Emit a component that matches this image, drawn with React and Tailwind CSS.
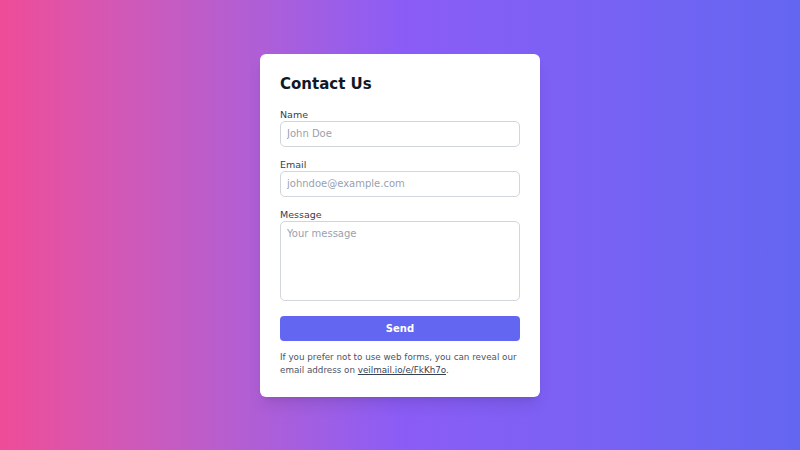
export default function App() {
  return (
    <main className="flex h-[450px] w-full items-center justify-center bg-linear-to-r from-[#ef4b98] via-[#8b5cf6] to-[#6366f1] font-['DejaVu_Sans',sans-serif]">
      {/* Card */}
      <div className="w-[280px] rounded-md bg-white p-5 shadow-lg">
        <h1 className="mb-[13px] text-[15px] leading-[21px] font-bold text-gray-900">Contact Us</h1>

        <form className="flex flex-col" onSubmit={(e) => e.preventDefault()}>
          <label className="text-[9.5px] leading-[13px] text-gray-700">Name</label>
          <input
            type="text"
            placeholder="John Doe"
            className="h-[26px] rounded-[5px] border border-gray-300 px-1.5 text-[10px] text-gray-800 placeholder:text-gray-400 outline-none"
          />

          <label className="mt-[11px] text-[9.5px] leading-[13px] text-gray-700">Email</label>
          <input
            type="email"
            placeholder="johndoe@example.com"
            className="h-[26px] rounded-[5px] border border-gray-300 px-1.5 text-[10px] text-gray-800 placeholder:text-gray-400 outline-none"
          />

          <label className="mt-[11px] text-[9.5px] leading-[13px] text-gray-700">Message</label>
          <textarea
            placeholder="Your message"
            className="h-[80px] resize-none rounded-[5px] border border-gray-300 px-1.5 py-1 text-[10px] text-gray-800 placeholder:text-gray-400 outline-none"
          />

          <button
            type="submit"
            className="mt-[15px] h-[25px] rounded bg-[#6366f1] text-[10px] font-bold text-white"
          >
            Send
          </button>
        </form>

        <p className="mt-[10px] text-[8.75px] leading-[13px] text-gray-600">
          If you prefer not to use web forms, you can reveal our email address on{' '}
          <a href="#" className="text-gray-700 underline">veilmail.io/e/FkKh7o</a>.
        </p>
      </div>
    </main>
  );
}
